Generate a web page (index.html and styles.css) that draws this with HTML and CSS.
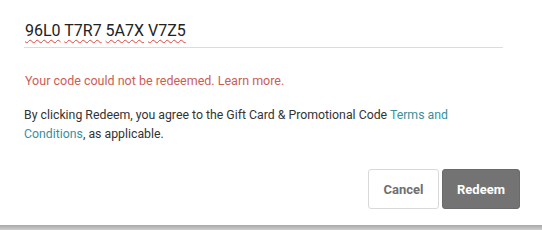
FILE: index.html
```html
<!DOCTYPE html>
<html>
<head>
<meta charset="utf-8">
<link rel="stylesheet" href="styles.css">
</head>
<body>
<div class="dialog">
  <div class="code-field">
    <span class="sp">96L0</span> <span class="sp">T7R7</span> <span class="sp">5A7X</span> <span class="sp">V7Z5</span>
  </div>
  <p class="error">Your code could not be redeemed. Learn more.</p>
  <p class="terms">By clicking Redeem, you agree to the Gift Card &amp; Promotional Code <a class="link" href="#">Terms and Conditions</a>, as applicable.</p>
  <div class="actions">
    <button class="btn btn-cancel">Cancel</button>
    <button class="btn btn-redeem">Redeem</button>
  </div>
</div>
<div class="shade"></div>
</body>
</html>
```

FILE: styles.css
```css
html, body {
  margin: 0;
  padding: 0;
  background: #ffffff;
}
body {
  width: 542px;
  height: 230px;
  overflow: hidden;
  font-family: Roboto, "Liberation Sans", sans-serif;
}
.dialog {
  box-sizing: border-box;
  width: 540px;
  height: 225px;
  background: #fff;
  border-radius: 0 0 4px 4px;
  padding: 20px 20px 0 24px;
  display: flex;
  flex-direction: column;
}
.code-field {
  width: 478px;
  padding-left: 1px;
  font-size: 16px;
  line-height: 22px;
  color: #222;
  padding-bottom: 5px;
  border-bottom: 1px solid #dcdcdc;
}
.sp {
  text-decoration: underline wavy #e0463e;
  text-decoration-thickness: 1px;
  text-underline-offset: 3px;
}
.error {
  margin: 25px 0 0 1px;
  font-size: 12.5px;
  line-height: 16px;
  color: #cb5d57;
}
.terms {
  margin: 17px 0 0 0;
  width: 470px;
  font-size: 12.3px;
  line-height: 19px;
  color: #333;
}
.link {
  color: #3a8f9c;
  text-decoration: none;
}
.actions {
  display: flex;
  justify-content: flex-end;
  gap: 3px;
  margin-top: 25px;
}
.btn {
  height: 40px;
  border-radius: 3px;
  font-family: Roboto, "Liberation Sans", sans-serif;
  font-size: 13px;
  font-weight: 700;
  cursor: pointer;
}
.btn-cancel {
  width: 71px;
  background: #fff;
  border: 1px solid #d9d9d9;
  color: #6f6f6f;
}
.btn-redeem {
  width: 78px;
  background: #737373;
  border: 1px solid #6a6a6a;
  color: #fff;
}
.shade {
  height: 5px;
  background: linear-gradient(#a9a9a9, #cdcdcd);
}
```
